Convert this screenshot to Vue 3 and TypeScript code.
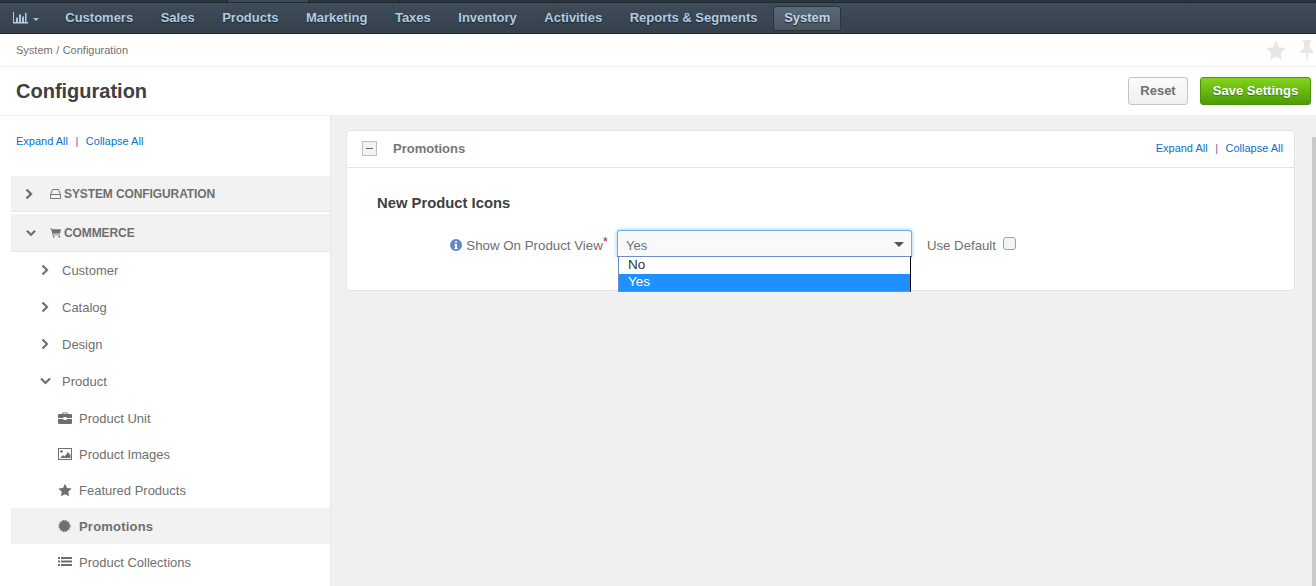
<script setup lang="ts">
const navItems = ['Customers', 'Sales', 'Products', 'Marketing', 'Taxes', 'Inventory', 'Activities', 'Reports & Segments']

const subGroups = ['Customer', 'Catalog', 'Design']

const productItems = [
  { label: 'Product Unit', icon: 'unit' },
  { label: 'Product Images', icon: 'images' },
  { label: 'Featured Products', icon: 'star' },
  { label: 'Promotions', icon: 'promo', active: true },
  { label: 'Product Collections', icon: 'list' }
]
</script>

<template>
  <div class="page">
    <header class="topbar">
      <div class="top-strip">
        <span></span>
        <span class="strip-light"></span>
        <span></span>
        <span></span>
        <span></span>
        <span></span>
        <span></span>
        <span></span>
      </div>
      <div class="nav-row">
        <div class="chart-menu">
          <svg class="chart-icon" width="15" height="12" viewBox="0 0 15 12">
            <path d="M0 0h1v10h14v1.500H0z" fill="#b9cde0" />
            <path d="M3 5.500h2V10H3zM6 2.500h2V10H6zM9 4.500h2V10H9zM12 1h1.500v9H12z" fill="#a9c8de" />
          </svg>
          <span class="caret"></span>
        </div>
        <nav class="main-nav">
          <a v-for="item in navItems" :key="item" class="nav-link">{{ item }}</a>
          <a class="nav-link nav-active">System</a>
        </nav>
      </div>
    </header>

    <div class="breadcrumb-row">
      <div class="breadcrumb">System / Configuration</div>
      <div class="page-tools">
        <svg width="20" height="19" viewBox="0 0 20 19">
          <path d="M10 0l3 6.200 6.800 1-4.900 4.700 1.200 6.800L10 15.500l-6.100 3.200 1.200-6.800L.2 7.200l6.800-1z" fill="#e6e6e6" />
        </svg>
        <svg class="pin" width="14" height="20" viewBox="0 0 14 20">
          <path d="M3 0h8v2H10v6l3.500 3.500V13H8l-.5 7h-1L6 13H.5v-1.500L4 8V2H3z" fill="#e6e6e6" />
        </svg>
      </div>
    </div>

    <div class="title-row">
      <h1 class="page-title">Configuration</h1>
      <div class="actions">
        <button class="btn btn-reset">Reset</button>
        <button class="btn btn-save">Save Settings</button>
      </div>
    </div>

    <div class="body-row">
      <aside class="sidebar">
        <div class="link-pair side-links">
          <a class="link">Expand All</a>
          <span class="sep">|</span>
          <a class="link">Collapse All</a>
        </div>

        <div class="tree">
          <div class="section-row">
            <svg class="chevron" width="8" height="12" viewBox="0 0 8 12">
              <path d="M1.500 1.500L6 6l-4.500 4.500" fill="none" stroke="#6f6f6f" stroke-width="2.400" />
            </svg>
            <svg class="section-icon" width="11" height="10" viewBox="0 0 11 10">
              <path d="M2.500.5h6l2 5v4H.5v-4z M.5 5.500h10" fill="none" stroke="#777" />
            </svg>
            <span>SYSTEM CONFIGURATION</span>
          </div>
          <div class="section-row second">
            <svg class="chevron down" width="10" height="8" viewBox="0 0 11 8">
              <path d="M1 1.500L5.500 6 10 1.500" fill="none" stroke="#6f6f6f" stroke-width="2.400" />
            </svg>
            <svg class="section-icon" width="11" height="10" viewBox="0 0 12 10">
              <path d="M0 0h2.200l.3 1H12l-1 4.500H3.500l.2 1H11v1H2.800L1.500 1H0z" fill="#6f6f6f" />
              <circle cx="4" cy="9" r="1" fill="#6f6f6f" />
              <circle cx="10" cy="9" r="1" fill="#6f6f6f" />
            </svg>
            <span>COMMERCE</span>
          </div>

          <div v-for="group in subGroups" :key="group" class="group-row">
            <svg class="chevron" width="8" height="12" viewBox="0 0 8 12">
              <path d="M1.500 1.500L6 6l-4.500 4.500" fill="none" stroke="#6f6f6f" stroke-width="2.200" />
            </svg>
            <span>{{ group }}</span>
          </div>
          <div class="group-row">
            <svg class="chevron down" width="11" height="8" viewBox="0 0 11 8">
              <path d="M1 1.500L5.500 6 10 1.500" fill="none" stroke="#6f6f6f" stroke-width="2.200" />
            </svg>
            <span>Product</span>
          </div>

          <div
            v-for="item in productItems"
            :key="item.label"
            class="leaf-row"
            :class="{ 'leaf-active': item.active }"
          >
            <svg class="leaf-icon" width="14" height="14" viewBox="0 0 14 14">
              <template v-if="item.icon === 'unit'">
                <path d="M4.500 3V1.500h5V3H13q1 0 1 1v3H8.500V6h-3v1H0V4q0-1 1-1zM5.500 3h3v-.7h-3z" fill="#6f6f6f" />
                <path d="M0 8h5.500v1h3V8H14v4q0 1-1 1H1q-1 0-1-1z" fill="#6f6f6f" />
              </template>
              <template v-else-if="item.icon === 'images'">
                <rect x=".5" y="1.500" width="13" height="11" fill="none" stroke="#6f6f6f" />
                <circle cx="3.500" cy="4.500" r="1.300" fill="#6f6f6f" />
                <path d="M2 11l3-3 1.500 1.500L10 5l2.500 3v3z" fill="#6f6f6f" />
              </template>
              <path
                v-else-if="item.icon === 'star'"
                d="M7 .8l2 4.100 4.600.7-3.300 3.200.8 4.500L7 11.200l-4.100 2.100.8-4.500L.4 5.600 5 4.900z"
                fill="#6f6f6f"
              />
              <template v-else-if="item.icon === 'promo'">
                <circle cx="6.500" cy="7" r="5.400" fill="#6f6f6f" />
                <circle cx="6.500" cy="7" r="5.700" fill="none" stroke="#6f6f6f" stroke-width="1" stroke-dasharray="1.500 1.500" />
              </template>
              <template v-else>
                <path d="M0 2h2v2H0zM3 2h11v2H3zM0 5.500h2v2H0zM3 5.500h11v2H3zM0 9h2v2H0zM3 9h11v2H3z" fill="#6f6f6f" />
              </template>
            </svg>
            <span>{{ item.label }}</span>
          </div>
        </div>
      </aside>

      <main class="content">
        <section class="panel">
          <div class="panel-head">
            <span class="collapse-btn"><span class="minus"></span></span>
            <span class="panel-title">Promotions</span>
            <div class="link-pair panel-links">
              <a class="link">Expand All</a>
              <span class="sep">|</span>
              <a class="link">Collapse All</a>
            </div>
          </div>
          <div class="panel-body">
            <h2 class="group-title">New Product Icons</h2>
            <div class="field-row">
              <div class="field-label">
                <svg class="info" width="12" height="12" viewBox="0 0 12 12">
                  <circle cx="6" cy="6" r="6" fill="#5f8ac7" />
                  <path d="M5 2.200h2v1.600H5zM4.500 5h2.500v4h.8v1H4.300V9H5V6h-.5z" fill="#fff" />
                </svg>
                <span>Show On Product View</span><em class="required">*</em>
              </div>
              <div class="select-wrap">
                <div class="select-box">
                  <span>Yes</span>
                  <span class="select-caret"></span>
                </div>
                <ul class="dropdown">
                  <li>No</li>
                  <li class="selected">Yes</li>
                </ul>
              </div>
              <label class="use-default">
                <span>Use Default</span>
                <span class="fake-check"></span>
              </label>
            </div>
          </div>
        </section>
      </main>
      <div class="scroll-thumb"></div>
    </div>
  </div>
</template>

<style>
html,
body {
  margin: 0;
  height: 100%;
  overflow: hidden;
}
</style>

<style scoped>
.page {
  width: 1316px;
  height: 586px;
  overflow: hidden;
  font-family: "Liberation Sans", Arial, sans-serif;
  font-size: 13px;
  color: #6f6f6f;
  background: #fff;
  display: flex;
  flex-direction: column;
}

.topbar {
  height: 34px;
  box-sizing: border-box;
  display: flex;
  flex-direction: column;
  background: linear-gradient(#3f4e59, #34414c);
  border-bottom: 1px solid #1d262c;
  flex-shrink: 0;
}

.top-strip {
  height: 3px;
  box-sizing: border-box;
  flex-shrink: 0;
  display: grid;
  grid-template-columns: 228px 81px 91px 87px 72px 108px 524px 1fr;
  background: #2b353d;
  border-bottom: 1px solid #20292f;
}

.top-strip span {
  border-right: 1px solid #1f272d;
}

.top-strip .strip-light {
  background: #3c4a55;
}

.nav-row {
  flex: 1;
  display: flex;
  align-items: center;
  min-height: 0;
}

.chart-menu {
  width: 51.500px;
  padding-left: 13px;
  box-sizing: border-box;
  display: flex;
  align-items: center;
  gap: 5px;
  flex-shrink: 0;
}

.caret {
  width: 0;
  height: 0;
  border-left: 3px solid transparent;
  border-right: 3px solid transparent;
  border-top: 3.500px solid #a9c1d6;
  margin-top: 2px;
}

.main-nav {
  display: flex;
  align-items: center;
}

.nav-link {
  padding: 0 13.750px;
  font-size: 13px;
  font-weight: 700;
  line-height: 24px;
  color: #b3cbe0;
  text-shadow: 0 1px 1px #1b252c;
  white-space: nowrap;
}

.nav-active {
  margin-left: 2px;
  padding: 0;
  width: 68px;
  text-align: center;
  height: 25px;
  box-sizing: border-box;
  line-height: 22px;
  color: #c4d7e6;
  background: linear-gradient(#5a6a78, #47555f);
  border: 1px solid #2a343c;
  border-radius: 3px;
}

.breadcrumb-row {
  height: 33px;
  box-sizing: border-box;
  border-bottom: 1px solid #f0f0f0;
  display: flex;
  align-items: center;
  justify-content: space-between;
  flex-shrink: 0;
}

.breadcrumb {
  padding-left: 16px;
  font-size: 11px;
  word-spacing: 0.4px;
  color: #6f6f6f;
}

.page-tools {
  display: flex;
  align-items: center;
  gap: 14px;
  margin-right: 2px;
}

.pin {
  display: block;
}

.title-row {
  height: 49px;
  box-sizing: border-box;
  padding: 0 5px 0 16px;
  border-bottom: 1px solid #f0f0f0;
  display: flex;
  align-items: center;
  justify-content: space-between;
  flex-shrink: 0;
}

.page-title {
  margin: 0;
  font-size: 20px;
  font-weight: 700;
  color: #404040;
}

.actions {
  display: flex;
  gap: 12px;
}

.btn {
  height: 28px;
  box-sizing: border-box;
  font-family: inherit;
  font-size: 13px;
  font-weight: 700;
  border-radius: 3px;
  padding: 0 0 2px;
}

.btn-reset {
  width: 60px;
  color: #6f6f6f;
  background: linear-gradient(#fbfbfb, #f0f0f0);
  border: 1px solid #c4c4c4;
}

.btn-save {
  width: 111px;
  color: #fff;
  text-shadow: 0 1px 1px #3c7a0c;
  background: linear-gradient(#82d41c, #4e9c08);
  border: 1px solid #4a9208;
}

.body-row {
  flex: 1;
  display: flex;
  min-height: 0;
  position: relative;
  background: #f0f0f0;
}

.sidebar {
  width: 331px;
  box-sizing: border-box;
  flex-shrink: 0;
  background: #fff;
  border-right: 1px solid #e8e8e8;
  padding-top: 19px;
}

.link-pair {
  font-size: 11px;
  line-height: 13px;
  display: flex;
}

.link {
  color: #0c70c8;
}

.sep {
  color: #6a5aa0;
  margin: 0 7.500px;
}

.side-links {
  padding-left: 16px;
}

.tree {
  margin: 28px 0 0 11px;
}

.section-row {
  height: 36px;
  box-sizing: border-box;
  background: #f2f2f2;
  border-bottom: 1px solid #e6e6e6;
  display: flex;
  align-items: center;
  font-size: 12px;
  font-weight: 700;
  letter-spacing: -0.1px;
  color: #6f6f6f;
  position: relative;
  padding-left: 39px;
}

.section-row.second {
  height: 38px;
  margin-top: 2px;
}

.section-row .chevron {
  position: absolute;
  left: 14px;
}

.section-row .chevron.down {
  left: 15px;
}

.section-icon {
  margin-right: 3px;
  flex-shrink: 0;
}

.group-row {
  height: 37px;
  box-sizing: border-box;
  padding: 0 0 1px 30px;
  display: flex;
  align-items: center;
  font-size: 13px;
  color: #6f6f6f;
}

.group-row .chevron {
  width: 8px;
  margin-right: 13px;
  flex-shrink: 0;
}

.group-row .chevron.down {
  width: 11px;
  margin-left: -1px;
  margin-right: 11px;
}

.leaf-row {
  height: 36px;
  display: flex;
  align-items: center;
  padding-left: 46px;
  font-size: 13px;
  color: #6f6f6f;
}

.leaf-icon {
  margin-right: 7px;
  margin-left: 1px;
  flex-shrink: 0;
}

.leaf-active {
  background: #f2f2f2;
  font-weight: 700;
  letter-spacing: 0.2px;
}

.content {
  flex: 1;
  padding: 14px 21px 0 15px;
  min-width: 0;
}

.panel {
  height: 161px;
  box-sizing: border-box;
  background: #fff;
  border: 1px solid #e4e4e4;
  border-radius: 4px;
}

.panel-head {
  height: 37px;
  box-sizing: border-box;
  padding: 0 11px 2px 15px;
  border-bottom: 1px solid #e4e4e4;
  display: flex;
  align-items: center;
}

.collapse-btn {
  width: 13px;
  height: 13px;
  border: 1px solid #c0c0c0;
  background: #f3f3f3;
  display: flex;
  align-items: center;
  justify-content: center;
  margin-right: 16px;
}

.minus {
  width: 7px;
  height: 1px;
  background: #666;
}

.panel-title {
  font-size: 13px;
  font-weight: 700;
  color: #777;
}

.panel-links {
  margin-left: auto;
}

.panel-body {
  padding: 27px 0 0 30px;
}

.group-title {
  margin: 0;
  font-size: 14.800px;
  line-height: 17px;
  font-weight: 700;
  color: #404040;
}

.field-row {
  margin-top: 18px;
  display: flex;
  align-items: flex-start;
}

.field-label {
  width: 231px;
  height: 28px;
  padding-top: 2px;
  box-sizing: border-box;
  display: flex;
  align-items: center;
  justify-content: flex-end;
  font-size: 13.300px;
  color: #6f6f6f;
  white-space: nowrap;
}

.info {
  margin-right: 4px;
}

.required {
  font-style: normal;
  color: #c8102e;
  align-self: flex-start;
  margin-top: 3px;
  line-height: 13px;
}

.select-wrap {
  width: 295px;
  margin-left: 9px;
  position: relative;
}

.select-box {
  height: 27px;
  box-sizing: border-box;
  border: 1px solid #6ab0ee;
  border-bottom-color: #222;
  border-radius: 3px 3px 0 0;
  background: #f9f9f9;
  box-shadow: 0 0 4px rgba(90, 170, 240, 0.7);
  display: flex;
  align-items: center;
  justify-content: space-between;
  padding: 4px 8px 0;
  font-size: 13px;
  color: #6f6f6f;
}

.select-caret {
  width: 0;
  height: 0;
  border-left: 5px solid transparent;
  border-right: 5px solid transparent;
  border-top: 5px solid #555;
  margin-top: -2px;
  margin-right: -1px;
}

.dropdown {
  list-style: none;
  margin: 0;
  padding: 0;
  position: absolute;
  top: 26px;
  left: 1px;
  right: 1px;
  height: 36px;
  box-sizing: border-box;
  overflow: hidden;
  background: #fff;
  border: 1px solid #000;
  border-left-color: #6d8fc9;
  border-top-color: #6d8fc9;
  border-bottom: 1px solid #6d8fc9;
  font-size: 13.500px;
  line-height: 15px;
  color: #333;
}

.dropdown li {
  height: 17px;
  padding-left: 9px;
}

.dropdown .selected {
  background: #1e90ff;
  color: #fff;
}

.use-default {
  margin-left: 15px;
  height: 28px;
  padding-top: 2px;
  box-sizing: border-box;
  display: flex;
  align-items: center;
  font-size: 13.200px;
  color: #6f6f6f;
}

.fake-check {
  width: 11px;
  height: 11px;
  border: 1px solid #a0a0a0;
  border-radius: 3px;
  background: #f4f4f4;
  margin-left: 7px;
  margin-top: -3px;
}

.scroll-thumb {
  position: absolute;
  right: 0;
  top: 21px;
  bottom: 0;
  width: 4px;
  background: #c9c9c9;
}
</style>
